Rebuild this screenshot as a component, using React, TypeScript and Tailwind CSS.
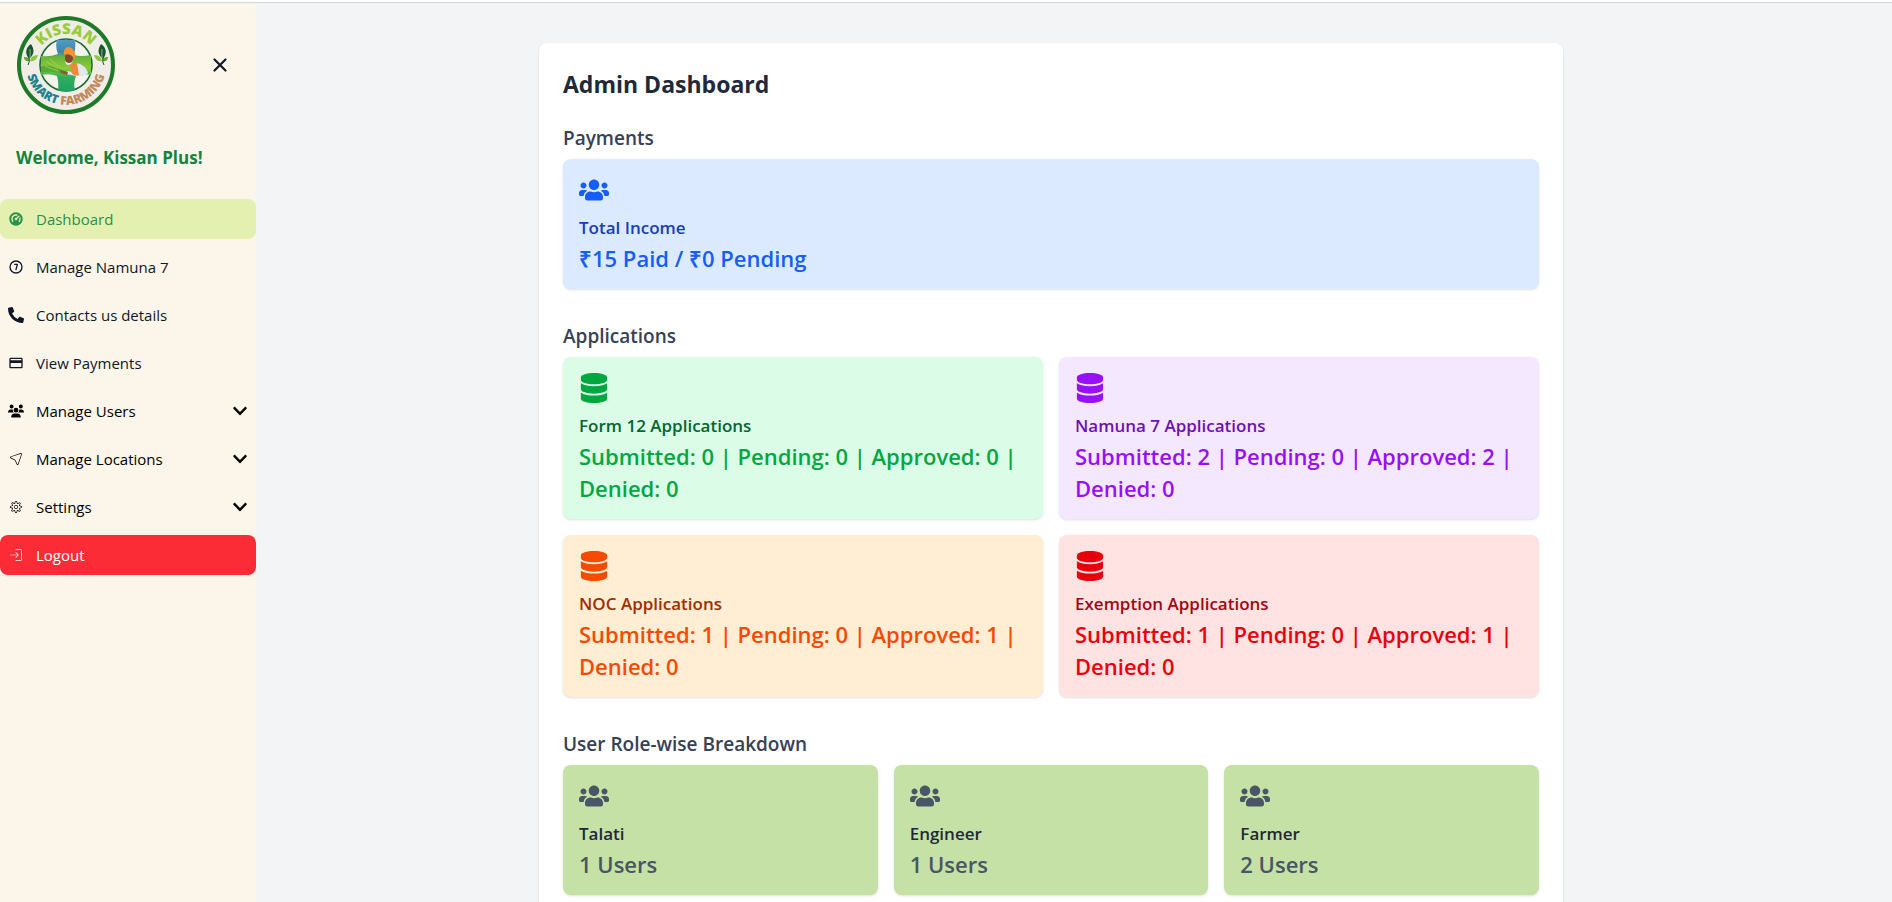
import type { ReactNode } from "react";
import type { IconType } from "react-icons";
import { CiLocationArrow1, CiLogin, CiSettings } from "react-icons/ci";
import { FaChevronDown, FaDatabase, FaPhoneAlt, FaUsers } from "react-icons/fa";
import { FaUsers as FaUsersCompact } from "react-icons/fa6";
import { MdPayment } from "react-icons/md";
import { RiDashboard2Fill } from "react-icons/ri";
import { TbCircleNumber7 } from "react-icons/tb";

function Leaf({ x, flip }: { x: number; flip?: boolean }) {
  return (
    <g transform={flip ? `translate(${x} 41) scale(-1 1)` : `translate(${x} 41)`}>
      <path d="M1-12C-5-8-5-2-1 3C4-1 5-6 1-12Z" fill="#17572c" />
      <path d="M-6 1C-6 5-3 6 0 5C0 2-3 1-6 1Z" fill="#62a834" />
      <path d="M8-1C3-1 0 2 0 5C4 6 7 3 8-1Z" fill="#8cc63f" />
      <path d="M0-7C0 0 1 3-2 9" fill="none" stroke="#e9f0dc" strokeWidth="0.6" />
      <path d="M-1 2Q0 6-2 9" fill="none" stroke="#17572c" strokeWidth="1" />
    </g>
  );
}

function Logo() {
  return (
    <svg viewBox="0 0 100 100" className="size-[100px]" role="img" aria-label="Kissan Smart Farming">
      <defs>
        <path id="arc-top" d="M19 50A31 31 0 0 1 81 50" />
        <path id="arc-bottom" d="M11.8 38A40 40 0 1 0 88.2 38" />
        <clipPath id="cross">
          <path d="M41 25H59Q60 33 58 40Q65 42 75 40V60Q66 58 60 61Q57 68 59 75Q50 78 42 75Q43 68 41 61Q34 58 25 60V41Q34 42 42 39Q39 32 41 25Z" />
        </clipPath>
        <linearGradient id="field" x1="0" y1="0" x2="0" y2="1">
          <stop offset="0" stopColor="#4f9fc4" />
          <stop offset="0.25" stopColor="#3d86ae" />
          <stop offset="0.34" stopColor="#69b43b" />
          <stop offset="0.55" stopColor="#8ccb39" />
          <stop offset="0.72" stopColor="#2fae5e" />
          <stop offset="1" stopColor="#1ea165" />
        </linearGradient>
      </defs>
      <circle cx="50" cy="50" r="47" fill="#efede6" stroke="#1d7a29" strokeWidth="4" />
      <circle cx="50" cy="50" r="26" fill="#f4f3ec" stroke="#1d6b32" strokeWidth="1.6" />
      <g clipPath="url(#cross)">
        <rect x="24" y="24" width="52" height="53" fill="url(#field)" />
        <path d="M24 52C32 49 40 51 50 57L48 60C40 56 32 56 24 58Z" fill="#58a936" />
        <path d="M30 46L42 54M34 44L45 54M29 51L42 56" stroke="#b5de4c" strokeWidth="0.7" />
      </g>
      <path d="M58 48C64 48 70 51 72 58C70 61 65 61 60 61L50 59L51 56L57 57Z" fill="#dfe7ef" />
      <path d="M54 48H61L63 60Q58 62 55 57Z" fill="#ef8a3c" />
      <ellipse cx="53" cy="43" rx="4" ry="5.5" fill="#7b4b30" />
      <path d="M49 46Q53 50 57 46L55 49Q52 51 50 49Z" fill="#ece6dd" />
      <path d="M48 40Q47 32 53 32Q60 33 59 44L56 41Q52 38 48 40Z" fill="#f39232" />
      <path d="M44 55L52 57L51 60L45 58Z" fill="#8a5a39" />
      <Leaf x={14} />
      <Leaf x={86} flip />
      <g className="font-['Open_Sans'] font-extrabold" textAnchor="middle">
        <text fontSize="15" fill="#9acb3b">
          <textPath href="#arc-top" startOffset="50%">KISSAN</textPath>
        </text>
        <text fontSize="12">
          <textPath href="#arc-bottom" startOffset="50%">
            <tspan fill="#23808a">SMART</tspan>
            <tspan fill="#c08a5c"> FARMING</tspan>
          </textPath>
        </text>
      </g>
    </svg>
  );
}

type NavItem = { label: string; icon: IconType; active?: boolean; group?: boolean };

const navItems: NavItem[] = [
  { label: "Dashboard", icon: RiDashboard2Fill, active: true },
  { label: "Manage Namuna 7", icon: TbCircleNumber7 },
  { label: "Contacts us details", icon: FaPhoneAlt },
  { label: "View Payments", icon: MdPayment },
  { label: "Manage Users", icon: FaUsersCompact, group: true },
  { label: "Manage Locations", icon: CiLocationArrow1, group: true },
  { label: "Settings", icon: CiSettings, group: true },
];

const rowClass = "flex h-10 w-full items-center gap-3 rounded-lg px-2 text-left text-[15px]";

function NavRow({ label, icon: Icon, active, group }: NavItem) {
  if (group) {
    return (
      <button type="button" aria-expanded="false" className={`${rowClass} text-black`}>
        <Icon className="size-4" />
        <span className="flex-1">{label}</span>
        <FaChevronDown className="size-4" />
      </button>
    );
  }
  return (
    <a
      href="#"
      aria-current={active ? "page" : undefined}
      className={`${rowClass} ${active ? "bg-[#e4f0b0] text-[#2a9048]" : "text-gray-900"}`}
    >
      <Icon className="size-4" />
      <span>{label}</span>
    </a>
  );
}

function Sidebar() {
  return (
    <aside className="w-64 shrink-0 bg-[#fcf5e9]">
      <div className="flex items-center justify-between py-3 pr-6 pl-4">
        <Logo />
        <button type="button" aria-label="Close menu" className="p-0.5 text-gray-900">
          <svg viewBox="0 0 20 20" className="size-5" fill="none" stroke="currentColor" strokeWidth="2.2" strokeLinecap="round">
            <path d="M4.5 4.5L15.5 15.5M15.5 4.5L4.5 15.5" />
          </svg>
        </button>
      </div>
      <p className="px-4 pt-[17px] pb-[27px] text-[17px] leading-7 font-bold text-[#12843f]">Welcome, Kissan Plus!</p>
      <nav className="space-y-2">
        {navItems.map((item) => (
          <NavRow key={item.label} {...item} />
        ))}
        <button type="button" className={`${rowClass} bg-[#fb2c36] text-white`}>
          <CiLogin className="size-4" />
          <span>Logout</span>
        </button>
      </nav>
    </aside>
  );
}

type CardProps = {
  icon: IconType;
  title: string;
  value: string;
  box: string;
  iconColor: string;
  titleColor: string;
  valueColor: string;
};

function StatCard({ icon: Icon, title, value, box, iconColor, titleColor, valueColor }: CardProps) {
  return (
    <article className={`rounded-lg px-4 pt-4 pb-[15px] shadow-sm ${box}`}>
      <Icon className={`mb-[9px] size-[30px] ${iconColor}`} />
      <h3 className={`text-[17px] leading-7 font-semibold ${titleColor}`}>{title}</h3>
      <p className={`text-[22px] leading-8 font-semibold ${valueColor}`}>{value}</p>
    </article>
  );
}

function Section({ title, children }: { title: string; children: ReactNode }) {
  return (
    <section className="mb-[33px]">
      <h2 className="mb-[7px] text-[19px] leading-7 font-semibold text-gray-700">{title}</h2>
      {children}
    </section>
  );
}

const applications: CardProps[] = [
  {
    icon: FaDatabase,
    title: "Form 12 Applications",
    value: "Submitted: 0 | Pending: 0 | Approved: 0 | Denied: 0",
    box: "bg-green-100",
    iconColor: "text-green-600",
    titleColor: "text-green-800",
    valueColor: "text-green-600",
  },
  {
    icon: FaDatabase,
    title: "Namuna 7 Applications",
    value: "Submitted: 2 | Pending: 0 | Approved: 2 | Denied: 0",
    box: "bg-purple-100",
    iconColor: "text-purple-600",
    titleColor: "text-purple-800",
    valueColor: "text-purple-600",
  },
  {
    icon: FaDatabase,
    title: "NOC Applications",
    value: "Submitted: 1 | Pending: 0 | Approved: 1 | Denied: 0",
    box: "bg-orange-100",
    iconColor: "text-orange-600",
    titleColor: "text-orange-800",
    valueColor: "text-orange-600",
  },
  {
    icon: FaDatabase,
    title: "Exemption Applications",
    value: "Submitted: 1 | Pending: 0 | Approved: 1 | Denied: 0",
    box: "bg-red-100",
    iconColor: "text-red-600",
    titleColor: "text-red-800",
    valueColor: "text-red-600",
  },
];

const roles = [
  { name: "Talati", count: 1 },
  { name: "Engineer", count: 1 },
  { name: "Farmer", count: 2 },
];

export default function App() {
  return (
    <div className="flex h-screen flex-col overflow-hidden bg-gray-100 font-['Open_Sans',sans-serif]">
      <div className="h-[3px] shrink-0 border-b border-gray-300 bg-white" />
      <div className="flex min-h-0 flex-1">
        <Sidebar />
        <main className="min-w-0 flex-1 overflow-hidden pt-10 pr-[46px]">
          <div className="mx-auto max-w-5xl rounded-lg bg-white px-6 pt-[25px] pb-6 shadow-sm">
            <h1 className="mb-6 text-[23px] leading-8 font-bold text-gray-800">Admin Dashboard</h1>
            <Section title="Payments">
              <StatCard
                icon={FaUsers}
                title="Total Income"
                value="₹15 Paid / ₹0 Pending"
                box="bg-blue-100"
                iconColor="text-blue-600"
                titleColor="text-blue-800"
                valueColor="text-blue-600"
              />
            </Section>
            <Section title="Applications">
              <div className="grid grid-cols-2 gap-4">
                {applications.map((card) => (
                  <StatCard key={card.title} {...card} />
                ))}
              </div>
            </Section>
            <Section title="User Role-wise Breakdown">
              <div className="grid grid-cols-3 gap-4">
                {roles.map((role) => (
                  <StatCard
                    key={role.name}
                    icon={FaUsers}
                    title={role.name}
                    value={`${role.count} Users`}
                    box="bg-[#c5e1a5]"
                    iconColor="text-gray-600"
                    titleColor="text-gray-800"
                    valueColor="text-gray-600"
                  />
                ))}
              </div>
            </Section>
          </div>
        </main>
      </div>
    </div>
  );
}
